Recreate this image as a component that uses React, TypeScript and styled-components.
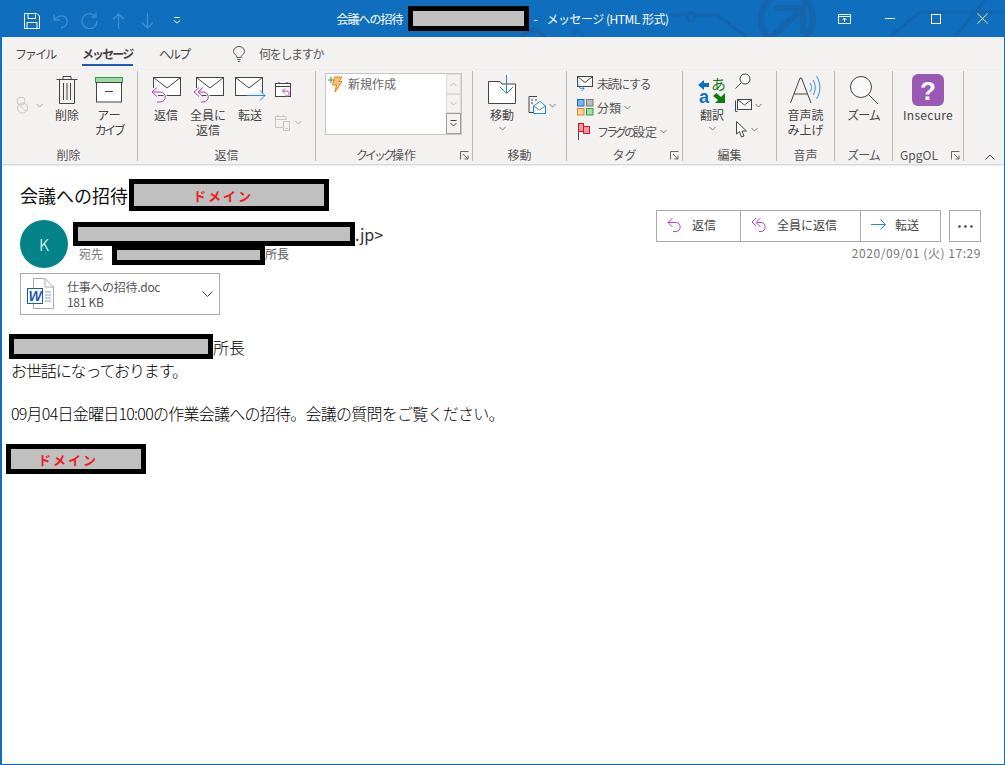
import styled, { createGlobalStyle } from 'styled-components';

const GlobalStyle = createGlobalStyle`
  html, body {
    margin: 0;
    padding: 0;
    background: #fff;
  }
  body {
    font-family: "Noto Sans CJK JP", "Noto Sans", sans-serif;
  }
`;

const Window = styled.div`
  position: relative;
  width: 1005px;
  height: 765px;
  box-sizing: border-box;
  border: 1px solid #106ebe;
  border-top: 0;
  border-left-width: 2px;
  background: #fff;
  overflow: hidden;
`;

const TitleBar = styled.header`
  position: relative;
  display: grid;
  grid-template-columns: 1fr auto 1fr;
  align-items: center;
  height: 37px;
  margin: 0 -1px 0 -2px;
  background: #106ebe;
  color: #fff;
  font-size: 12px;
`;

const TitleArt = styled.svg`
  position: absolute;
  top: 0;
  left: 0;
`;

const QuickAccess = styled.div`
  position: relative;
  display: flex;
  align-items: center;
  padding: 4px 0 0 17px;
`;

const QatButton = styled.span`
  display: flex;
  align-items: center;
  justify-content: center;
  width: 29px;
  height: 24px;
`;

const TitleText = styled.div`
  position: relative;
  display: flex;
  align-items: center;
  gap: 5px;
  line-height: 25px;
`;

const TitleDash = styled.span`
  width: 8px;
`;

const Condensed = styled.span<{ $ls: number }>`
  letter-spacing: ${(p) => p.$ls}px;
`;

const Redaction = styled.span<{ $w: number; $h: number; $pad?: number }>`
  display: flex;
  flex: none;
  align-items: center;
  justify-content: flex-start;
  box-sizing: border-box;
  width: ${(p) => p.$w}px;
  height: ${(p) => p.$h}px;
  padding-left: ${(p) => p.$pad ?? 0}px;
  border: 5px solid #000;
  background: #c0c0c0;
`;

const DomainMark = styled.span`
  color: #ed1c24;
  font-size: 13px;
  font-weight: 700;
  line-height: 1;
  letter-spacing: 2px;
`;

const WindowControls = styled.div`
  position: relative;
  display: flex;
  justify-content: flex-end;
`;

const ControlButton = styled.span`
  display: flex;
  align-items: center;
  justify-content: center;
  width: 46px;
  height: 37px;
`;

const TabBar = styled.nav`
  display: flex;
  align-items: center;
  height: 33px;
  padding-left: 13px;
  background: #f3f2f1;
  color: #444;
  font-size: 12px;
`;

const Tab = styled.span<{ $active?: boolean; $w: number }>`
  position: relative;
  width: ${(p) => p.$w}px;
  font-weight: ${(p) => (p.$active ? 700 : 400)};
  letter-spacing: -1.9px;
  line-height: 33px;
  ${(p) =>
    p.$active &&
    `&::after {
      content: '';
      position: absolute;
      left: 0;
      bottom: 4px;
      width: 51px;
      height: 2px;
      background: #185abd;
    }`}
`;

const TellMe = styled.span`
  display: flex;
  align-items: center;
  gap: 14px;
  padding-left: 8px;
  color: #555;
  letter-spacing: -1.3px;
`;

const Ribbon = styled.section`
  position: relative;
  display: flex;
  height: 94px;
  background: #f3f2f1;
  box-shadow: 0 1px 2px #c8c8c8;
  color: #444;
  font-size: 12px;
  line-height: 15px;
`;

const Group = styled.div<{ $w: number }>`
  position: relative;
  display: flex;
  flex: none;
  flex-direction: column;
  box-sizing: border-box;
  width: ${(p) => p.$w}px;
  height: 90px;
  margin-top: 1px;
  border-right: 1px solid #bdbbb9;
`;

const GroupBody = styled.div<{ $pad?: number }>`
  display: flex;
  flex: 1;
  align-items: flex-start;
  padding-left: ${(p) => p.$pad ?? 0}px;
`;

const GroupLabel = styled.div<{ $offset?: number }>`
  margin-bottom: -3px;
  padding-right: ${(p) => p.$offset ?? 0}px;
  color: #555;
  line-height: 18px;
  text-align: center;
`;

const Launcher = styled.svg`
  position: absolute;
  right: 3px;
  bottom: 1px;
`;

const BigButton = styled.div<{ $w: number }>`
  display: flex;
  flex: none;
  flex-direction: column;
  align-items: center;
  width: ${(p) => p.$w}px;
  text-align: center;
`;

const BigIcon = styled.div`
  display: flex;
  align-items: center;
  justify-content: center;
  height: 33px;
  margin-bottom: 1px;
  padding-top: 2px;
`;

const ChevronSlot = styled.div`
  display: flex;
  justify-content: center;
  padding-top: 4px;
`;

const SmallColumn = styled.div<{ $gap: number; $top: number; $left?: number }>`
  display: flex;
  flex-direction: column;
  gap: ${(p) => p.$gap}px;
  margin-top: ${(p) => p.$top}px;
  margin-left: ${(p) => p.$left ?? 0}px;
`;

const SmallItem = styled.div<{ $disabled?: boolean }>`
  display: flex;
  align-items: center;
  gap: 3px;
  height: 24px;
  white-space: nowrap;
  color: #555;
  opacity: ${(p) => (p.$disabled ? 0.6 : 1)};
`;

const QuickBox = styled.div`
  display: flex;
  width: 137px;
  height: 62px;
  margin-top: 2px;
  box-sizing: border-box;
  border: 1px solid #c8c6c4;
  background: #fff;
`;

const QuickList = styled.div`
  display: flex;
  flex: 1;
  align-items: flex-start;
  gap: 5px;
  padding: 2px 0 0 2px;
  color: #666;
`;

const QuickScroll = styled.div`
  display: grid;
  grid-template-rows: 20px 19px 21px;
  width: 15px;
`;

const QuickArrow = styled.span<{ $last?: boolean }>`
  display: flex;
  align-items: center;
  justify-content: center;
  box-sizing: border-box;
  border: 1px solid ${(p) => (p.$last ? '#9e9e9e' : '#dcdcdc')};
  background: #f3f2f1;
`;

const CollapseButton = styled.svg`
  position: absolute;
  right: 9px;
  bottom: 4px;
`;

const TranslateSvg = styled.svg`
  overflow: visible;
`;

const MessageHeader = styled.div`
  display: flex;
  flex-direction: column;
  padding: 15px 23px 0 18px;
`;

const SubjectRow = styled.h1`
  display: flex;
  align-items: center;
  gap: 1px;
  height: 32px;
  margin: 0;
  color: #111;
  font-size: 18px;
  font-weight: 400;
`;

const HeaderRow = styled.div`
  display: flex;
  justify-content: space-between;
  margin-top: -1px;
`;

const SenderBlock = styled.div`
  padding-top: 10px;
`;

const SenderRow = styled.div`
  display: flex;
  gap: 5px;
`;

const Avatar = styled.div`
  display: flex;
  align-items: center;
  justify-content: center;
  width: 48px;
  height: 48px;
  border-radius: 50%;
  background: #038387;
  color: #fff;
  font-size: 16px;
  font-weight: 300;
`;

const SenderInfo = styled.div`
  display: flex;
  flex-direction: column;
  padding-top: 2px;
`;

const SenderLine = styled.div`
  display: flex;
  align-items: flex-end;
  height: 24px;
  color: #333;
  font-size: 16px;
  line-height: 23px;
`;

const RecipientLine = styled.div`
  display: flex;
  align-items: center;
  height: 20px;
  margin-top: -1px;
  padding-left: 6px;
  color: #555;
  font-size: 12px;
  line-height: 16px;
`;

const RecipientText = styled.span`
  padding-bottom: 3px;
`;

const ToLabel = styled.span`
  width: 33px;
  padding-bottom: 3px;
  color: #777;
`;

const Attachment = styled.div`
  display: flex;
  align-items: center;
  box-sizing: border-box;
  width: 200px;
  height: 42px;
  margin-top: 5px;
  padding: 0 6px;
  border: 1px solid #ababab;
`;

const AttachmentText = styled.div`
  flex: 1;
  padding-left: 12px;
  color: #555;
  font-size: 12px;
  letter-spacing: -0.3px;
  line-height: 15px;
`;

const ActionColumn = styled.div`
  display: flex;
  flex-direction: column;
  align-items: flex-end;
`;

const ActionBar = styled.div`
  display: flex;
  gap: 8px;
`;

const ActionGroup = styled.div`
  display: flex;
  height: 32px;
  box-sizing: border-box;
  border: 1px solid #ababab;
`;

const ActionButton = styled.span<{ $w: number }>`
  display: flex;
  align-items: center;
  gap: 9px;
  box-sizing: border-box;
  width: ${(p) => p.$w}px;
  padding: 0 0 3px 10px;
  border-right: 1px solid #ababab;
  color: #444;
  font-size: 12px;
  &:last-child {
    border-right: 0;
  }
`;

const MoreButton = styled.span`
  display: flex;
  align-items: center;
  justify-content: center;
  width: 32px;
  height: 32px;
  box-sizing: border-box;
  border: 1px solid #ababab;
`;

const DateText = styled.div`
  margin-top: 2px;
  color: #777;
  font-size: 12px;
  letter-spacing: 0.55px;
  line-height: 17px;
`;

const MessageBody = styled.div`
  display: flex;
  flex-direction: column;
  align-items: flex-start;
  padding: 19px 0 0 7px;
  color: #000;
  font-size: 16px;
  font-weight: 300;
`;

const BodyNameRow = styled.div`
  display: flex;
  align-items: center;
  height: 25px;
`;

const BodyLine = styled.p<{ $gap?: number; $ls: number }>`
  margin: ${(p) => p.$gap ?? 0}px 0 0 2px;
  letter-spacing: ${(p) => p.$ls}px;
  line-height: 22px;
  white-space: nowrap;
`;

const SignatureBox = styled.div`
  margin: 20px 0 0 -3px;
`;

const PURPLE = '#b146c2';
const BLUE = '#2b88d8';
const DARK = '#444';
const RIBBON_BG = '#f3f2f1';

function Chevron({ color = '#777' }: { color?: string }) {
  return (
    <svg width="7" height="5" viewBox="0 0 7 5" fill="none">
      <path d="M.5 1 3.500 4 6.500 1" stroke={color} />
    </svg>
  );
}

function Envelope({ x = 3, y = 5 }: { x?: number; y?: number }) {
  return (
    <g stroke={DARK} fill="#fff">
      <rect x={x + 0.5} y={y + 0.5} width="27" height="18" />
      <path d={`M${x + 0.5} ${y + 0.5} ${x + 14} ${y + 11} ${x + 27.5} ${y + 0.5}`} fill="none" />
    </g>
  );
}

function ReplyBig() {
  return (
    <svg width="32" height="28" viewBox="0 0 32 28" fill="none">
      <Envelope x={3} y={1} />
      <path d="M1 12H8V28H1Z" fill={RIBBON_BG} />
      <path d="M2 16H10C17 16 17 26 10 26H7" stroke={RIBBON_BG} strokeWidth="3" />
      <path d="M2 16H10C17 16 17 26 10 26H7M7 11.500 2 16 7 20.500" stroke={PURPLE} />
    </svg>
  );
}

function ReplyAllBig() {
  return (
    <svg width="32" height="28" viewBox="0 0 32 28" fill="none">
      <Envelope x={4} y={1} />
      <path d="M1 12H10V28H1Z" fill={RIBBON_BG} />
      <path d="M7 16H11C18 16 18 26 11 26H9" stroke={RIBBON_BG} strokeWidth="3" />
      <path d="M7 16H11C18 16 18 26 11 26H9M7 11.500 2 16 7 20.500M11 11.500 6 16 11 20.500" stroke={PURPLE} />
    </svg>
  );
}

function ForwardBig() {
  return (
    <svg width="32" height="28" viewBox="0 0 32 28" fill="none">
      <Envelope x={1} y={1} />
      <path d="M13 17H32V24H13Z" fill={RIBBON_BG} />
      <path d="M13 19.500H31M26 14.500 31 19.500 26 24.500" stroke={BLUE} />
    </svg>
  );
}

function TrashIcon() {
  return (
    <svg width="22" height="30" viewBox="0 0 22 30" fill="none" stroke={DARK}>
      <path d="M.5 4.500H21.500M7 4V1.500H15V4M3.500 5V28.500H18.500V5M7.500 8V25M11 8V25M14.500 8V25" />
    </svg>
  );
}

function ArchiveIcon() {
  return (
    <svg width="28" height="26" viewBox="0 0 28 26" fill="none">
      <rect x=".5" y=".5" width="27" height="5" fill="#a0d8a4" stroke="#2f9e44" />
      <rect x="1.500" y="5.500" width="25" height="19.500" fill="#fff" stroke={DARK} />
      <path d="M10 14.500H18" stroke={DARK} />
    </svg>
  );
}

function IgnoreIcon() {
  return (
    <svg width="20" height="18" viewBox="0 0 20 18" fill="none" stroke="#aaa">
      <circle cx="8" cy="5" r="4" />
      <circle cx="9.500" cy="12" r="5" />
      <path d="M6 8.500 13 15.500" />
    </svg>
  );
}

function MeetingReplyIcon() {
  return (
    <svg width="17" height="18" viewBox="0 0 17 18" fill="none">
      <rect x=".5" y="2.500" width="15" height="13" fill="#fff" stroke={DARK} />
      <path d="M.5 5.500H15.500M4 1V3M12 1V3" stroke={DARK} />
      <path d="M8 10H12C15 10 15 15 12 15H10M10 7.500 7.500 10 10 12.500" stroke={PURPLE} />
    </svg>
  );
}

function CalendarPhoneIcon() {
  return (
    <svg width="17" height="17" viewBox="0 0 17 17" fill="none" stroke="#aaa">
      <path d="M9 13.500H.5V2.500H11V6M.5 5.500H11M3 1V3M8.500 1V3" />
      <rect x="8.500" y="7.500" width="6" height="9" fill={RIBBON_BG} />
      <path d="M10.500 14.500H12.500" />
    </svg>
  );
}

function BoltIcon() {
  return (
    <svg width="15" height="17" viewBox="0 0 15 17" fill="none">
      <path d="M6.500 1H14L11 5.500H14L7 16 8.500 9H4.500Z" fill="#fbbf7d" stroke="#e8811a" />
      <path d="M0 4H6M3 1V7" stroke="#2f9e44" />
    </svg>
  );
}

function MoveIcon() {
  return (
    <svg width="30" height="30" viewBox="0 0 30 30" fill="none">
      <path d="M1.500 6.500H13L15 9H28.500V28.500H1.500Z" fill="#fff" stroke={DARK} />
      <path d="M19.500 0V18M13 12 19.500 18.500 26 12" stroke={BLUE} />
    </svg>
  );
}

function RulesIcon() {
  return (
    <svg width="18" height="18" viewBox="0 0 18 18" fill="none">
      <path d="M9 .5H1V16.500H7" stroke={DARK} />
      <path d="M3 4H5M3 7H5M7 4H9" stroke={DARK} />
      <path d="M5.500 10 12 5.500 17.500 10V17.500H5.500Z" fill="#fff" stroke={BLUE} />
      <path d="M5.500 10 11.500 14 17.500 10" stroke={BLUE} />
    </svg>
  );
}

function UnreadIcon() {
  return (
    <svg width="17" height="17" viewBox="0 0 17 17" fill="none">
      <rect x=".5" y="1.500" width="15" height="10" fill="#fff" stroke={DARK} />
      <path d="M.5 1.500 8 7.500 15.500 1.500" stroke={DARK} />
      <path d="M1 7C0 12 3 14 7 13.500M4.500 11 7 13.500 4.500 16" stroke={BLUE} />
    </svg>
  );
}

function CategoryIcon() {
  return (
    <svg width="17" height="17" viewBox="0 0 17 17">
      <rect x=".5" y=".5" width="6.500" height="6.500" fill="#7fb5e8" stroke="#106ebe" />
      <rect x="9.500" y=".5" width="6.500" height="6.500" fill="#bbb" stroke="#777" />
      <rect x=".5" y="9.500" width="6.500" height="6.500" fill="#fdd8a0" stroke="#e8811a" />
      <rect x="9.500" y="9.500" width="6.500" height="6.500" fill="#a8dca8" stroke="#2f9e44" />
    </svg>
  );
}

function FlagIcon() {
  return (
    <svg width="17" height="17" viewBox="0 0 17 17">
      <path d="M1.500 0V17" stroke={DARK} />
      <rect x="6.500" y="3.500" width="6" height="7" fill="#f79a9f" stroke="#d01820" />
      <rect x="1.500" y=".5" width="5" height="8" fill="#f79a9f" stroke="#d01820" />
    </svg>
  );
}

function TranslateIcon() {
  return (
    <TranslateSvg width="30" height="30" viewBox="0 0 30 30">
      <path d="M1 10 7 5V8H12V12H7V15Z" fill="#106ebe" />
      <text x="14" y="15" fontSize="15" fill="#107c10" fontFamily="Noto Sans CJK JP, sans-serif">
        あ
      </text>
      <text x="2" y="28" fontSize="18" fontWeight="700" fill="#106ebe" fontFamily="Liberation Sans, sans-serif">
        a
      </text>
      <path d="M28 18V28H18L21 25 16 21 19.500 18 24 22 28 18Z" fill="#107c10" />
    </TranslateSvg>
  );
}

function FindIcon() {
  return (
    <svg width="16" height="16" viewBox="0 0 16 16" fill="none" stroke={DARK}>
      <circle cx="10" cy="6" r="5" fill="#fff" />
      <path d="M6.500 9.500 .5 15.500" />
    </svg>
  );
}

function MailStackIcon() {
  return (
    <svg width="17" height="13" viewBox="0 0 17 13" fill="none" stroke={DARK}>
      <path d="M2.500 12.500H.5V1.500" />
      <rect x="2.500" y=".5" width="14" height="10" fill="#fff" />
      <path d="M2.500 .5 9.500 6 16.500 .5" />
    </svg>
  );
}

function CursorIcon() {
  return (
    <svg width="13" height="17" viewBox="0 0 13 17" fill="#fff" stroke={DARK}>
      <path d="M1.500 .5V13L4.500 10.500 6.500 16 9 15 7 10H11.500Z" />
    </svg>
  );
}

function SpeakIcon() {
  return (
    <svg width="32" height="30" viewBox="0 0 32 30" fill="none">
      <path d="M.5 28 10 3H11.500L21 28M4 19H17.500" stroke={DARK} />
      <path d="M20 8C22 11 22 14 20 17M23 5C26 10 26 15 23 20M26.500 1C31 8 31 17 26.500 24" stroke={BLUE} />
    </svg>
  );
}

function ZoomIcon() {
  return (
    <svg width="30" height="30" viewBox="0 0 30 30" fill="none" stroke={DARK}>
      <circle cx="12" cy="12" r="10.500" fill="#f9f9f9" />
      <path d="M19.500 19.500 29 29" />
    </svg>
  );
}

function InsecureIcon() {
  return (
    <svg width="32" height="32" viewBox="0 0 32 32">
      <rect width="32" height="32" rx="6" fill="#9b59b6" />
      <text x="16" y="26" textAnchor="middle" fontSize="26" fontWeight="700" fill="#fff" fontFamily="Liberation Sans, sans-serif">
        ?
      </text>
    </svg>
  );
}

function WordDocIcon() {
  return (
    <svg width="28" height="32" viewBox="0 0 28 32" fill="none">
      <path d="M6.500 .5H18L26.500 9V30.500H6.500Z" fill="#fff" stroke="#aaa" />
      <path d="M18 .5V9H26.500" stroke="#aaa" />
      <path d="M18 14H24M18 17H24M18 20H24M18 23H24" stroke="#7fa6d9" />
      <rect x=".5" y="10.500" width="15" height="15" fill="#fff" stroke="#185abd" />
      <text x="8" y="23" textAnchor="middle" fontSize="14" fontWeight="700" fontStyle="italic" fill="#185abd" fontFamily="Liberation Sans, sans-serif">
        W
      </text>
    </svg>
  );
}

function ReplySmall() {
  return (
    <svg width="16" height="16" viewBox="0 0 16 16" fill="none" stroke={PURPLE}>
      <path d="M1 5.500H9C14.500 5.500 14.500 14.500 9 14.500H6M5.500 1 1 5.500 5.500 10" />
    </svg>
  );
}

function ReplyAllSmall() {
  return (
    <svg width="17" height="16" viewBox="0 0 17 16" fill="none" stroke={PURPLE}>
      <path d="M6 5.500H10C15.500 5.500 15.500 14.500 10 14.500H8M5 1 1 5 5 9M9.500 1 5 5.500 9.500 10" />
    </svg>
  );
}

function ForwardSmall() {
  return (
    <svg width="15" height="11" viewBox="0 0 15 11" fill="none" stroke={BLUE}>
      <path d="M0 5.500H14.500M9.500 .5 14.500 5.500 9.500 10.500" />
    </svg>
  );
}

function LauncherIcon() {
  return (
    <Launcher width="9" height="9" viewBox="0 0 9 9" fill="none" stroke="#666">
      <path d="M.5 8.500V.5H8.500M3 3 8 8M4.500 8H8V4.500" />
    </Launcher>
  );
}

function Domain({ w, h, pad }: { w: number; h: number; pad: number }) {
  return (
    <Redaction $w={w} $h={h} $pad={pad}>
      <DomainMark>ドメイン</DomainMark>
    </Redaction>
  );
}

export default function App() {
  return (
    <>
      <GlobalStyle />
      <Window>
        <TitleBar>
          <TitleArt width="1005" height="37" viewBox="0 0 1005 37" fill="none" stroke="#1565ae" strokeWidth="3">
            <circle cx="787" cy="19" r="26" strokeWidth="6" />
            <path d="M775 8H803V34M803 8 772 37" strokeWidth="6" />
            <path d="M670 15H687M695 15H717L747 37M890 37 920 12H1005M985 0 955 37" />
            <circle cx="691" cy="17" r="4" />
            <circle cx="533" cy="42" r="12" strokeWidth="4" />
            <circle cx="578" cy="35" r="4" />
          </TitleArt>
          <QuickAccess>
            <QatButton>
              <svg width="16" height="16" viewBox="0 0 16 16" fill="none" stroke="#fff">
                <path d="M.5 .5H13L15.500 3V15.500H.5ZM4 .5V5.500H11.500V.5M3 15.500V9.500H13V15.500" />
              </svg>
            </QatButton>
            <QatButton>
              <svg width="15" height="16" viewBox="0 0 15 16" fill="none" stroke="#3f8fd4" strokeWidth="1.300">
                <path d="M1 1V7H7M1.500 6.500C6 1 14 2 14 8.500 14 12 11.500 14.500 8 15" />
              </svg>
            </QatButton>
            <QatButton>
              <svg width="17" height="17" viewBox="0 0 17 17" fill="none" stroke="#3f8fd4" strokeWidth="1.300">
                <path d="M14 4A7.500 7.500 0 1 0 16 9M15 .5V5H10.500" />
              </svg>
            </QatButton>
            <QatButton>
              <svg width="13" height="16" viewBox="0 0 13 16" fill="none" stroke="#3f8fd4" strokeWidth="1.300">
                <path d="M6.500 16V1M1 6.500 6.500 1 12 6.500" />
              </svg>
            </QatButton>
            <QatButton>
              <svg width="13" height="16" viewBox="0 0 13 16" fill="none" stroke="#3f8fd4" strokeWidth="1.300">
                <path d="M6.500 0V15M1 9.500 6.500 15 12 9.500" />
              </svg>
            </QatButton>
            <QatButton>
              <svg width="8" height="7" viewBox="0 0 8 7" fill="none" stroke="#fff">
                <path d="M1 .5H7M1 3.500 4 6 7 3.500" />
              </svg>
            </QatButton>
          </QuickAccess>
          <TitleText>
            <Condensed $ls={-1}>会議への招待</Condensed>
            <Redaction $w={121} $h={25} />
            <TitleDash>-</TitleDash>
            <Condensed $ls={-0.5}>メッセージ (HTML 形式)</Condensed>
          </TitleText>
          <WindowControls>
            <ControlButton>
              <svg width="13" height="10" viewBox="0 0 13 10" fill="none" stroke="#fff">
                <path d="M.5 .5H12.500V9.500H.5ZM.5 2.500H12.500M6.500 8V4.500M4.500 6 6.500 4 8.500 6" />
              </svg>
            </ControlButton>
            <ControlButton>
              <svg width="10" height="1" viewBox="0 0 10 1" stroke="#fff">
                <path d="M0 .5H10" />
              </svg>
            </ControlButton>
            <ControlButton>
              <svg width="10" height="10" viewBox="0 0 10 10" fill="none" stroke="#fff">
                <rect x=".5" y=".5" width="9" height="9" />
              </svg>
            </ControlButton>
            <ControlButton>
              <svg width="11" height="11" viewBox="0 0 11 11" fill="none" stroke="#fff">
                <path d="M.5 .5 10.500 10.500M10.500 .5 .5 10.500" />
              </svg>
            </ControlButton>
          </WindowControls>
        </TitleBar>

        <TabBar>
          <Tab $w={67}>ファイル</Tab>
          <Tab $w={77} $active>
            メッセージ
          </Tab>
          <Tab $w={66}>ヘルプ</Tab>
          <TellMe>
            <svg width="12" height="16" viewBox="0 0 12 16" fill="none" stroke="#555">
              <path d="M4 11.500C4 9 .5 8 .5 5.500A5.500 5 0 0 1 11.500 5.500C11.500 8 8 9 8 11.500ZM4.500 13.500H7.500M5 15.500H7" />
            </svg>
            何をしますか
          </TellMe>
        </TabBar>

        <Ribbon>
          <Group $w={136}>
            <GroupBody $pad={11}>
              <SmallColumn $gap={0} $top={22}>
                <SmallItem $disabled>
                  <IgnoreIcon />
                  <Chevron />
                </SmallItem>
              </SmallColumn>
              <BigButton $w={48}>
                <BigIcon>
                  <TrashIcon />
                </BigIcon>
                削除
              </BigButton>
              <BigButton $w={36}>
                <BigIcon>
                  <ArchiveIcon />
                </BigIcon>
                アー
                <Condensed $ls={-2.5}>カイブ</Condensed>
              </BigButton>
            </GroupBody>
            <GroupLabel $offset={2}>削除</GroupLabel>
          </Group>

          <Group $w={178}>
            <GroupBody $pad={7}>
              <BigButton $w={42}>
                <BigIcon>
                  <ReplyBig />
                </BigIcon>
                返信
              </BigButton>
              <BigButton $w={42}>
                <BigIcon>
                  <ReplyAllBig />
                </BigIcon>
                全員に
                <br />
                返信
              </BigButton>
              <BigButton $w={42}>
                <BigIcon>
                  <ForwardBig />
                </BigIcon>
                転送
              </BigButton>
              <SmallColumn $gap={8} $top={7} $left={4}>
                <SmallItem>
                  <MeetingReplyIcon />
                </SmallItem>
                <SmallItem $disabled>
                  <CalendarPhoneIcon />
                  <Chevron />
                </SmallItem>
              </SmallColumn>
            </GroupBody>
            <GroupLabel>返信</GroupLabel>
          </Group>

          <Group $w={157}>
            <GroupBody $pad={9}>
              <QuickBox>
                <QuickList>
                  <BoltIcon />
                  新規作成
                </QuickList>
                <QuickScroll>
                  <QuickArrow>
                    <svg width="7" height="5" viewBox="0 0 7 5" fill="none" stroke="#bbb">
                      <path d="M.5 4 3.500 1 6.500 4" />
                    </svg>
                  </QuickArrow>
                  <QuickArrow>
                    <Chevron color="#bbb" />
                  </QuickArrow>
                  <QuickArrow $last>
                    <svg width="7" height="7" viewBox="0 0 7 7" fill="none" stroke="#444">
                      <path d="M.5 .5H6.500M.5 3 3.500 6 6.500 3" />
                    </svg>
                  </QuickArrow>
                </QuickScroll>
              </QuickBox>
            </GroupBody>
            <GroupLabel $offset={16}>
              <Condensed $ls={-3}>クイック</Condensed>
              操作
            </GroupLabel>
            <LauncherIcon />
          </Group>

          <Group $w={94}>
            <GroupBody $pad={3}>
              <BigButton $w={52}>
                <BigIcon>
                  <MoveIcon />
                </BigIcon>
                移動
                <ChevronSlot>
                  <Chevron />
                </ChevronSlot>
              </BigButton>
              <SmallColumn $gap={0} $top={22}>
                <SmallItem>
                  <RulesIcon />
                  <Chevron />
                </SmallItem>
              </SmallColumn>
            </GroupBody>
            <GroupLabel>移動</GroupLabel>
          </Group>

          <Group $w={116}>
            <GroupBody $pad={10}>
              <SmallColumn $gap={0} $top={0}>
                <SmallItem>
                  <UnreadIcon />
                  <Condensed $ls={-1.4}>未読にする</Condensed>
                </SmallItem>
                <SmallItem>
                  <CategoryIcon />
                  分類
                  <Chevron />
                </SmallItem>
                <SmallItem>
                  <FlagIcon />
                  <span>
                    <Condensed $ls={-3}>フラグの</Condensed>
                    設定
                  </span>
                  <Chevron />
                </SmallItem>
              </SmallColumn>
            </GroupBody>
            <GroupLabel>タグ</GroupLabel>
            <LauncherIcon />
          </Group>

          <Group $w={94}>
            <GroupBody $pad={6}>
              <BigButton $w={46}>
                <BigIcon>
                  <TranslateIcon />
                </BigIcon>
                翻訳
                <ChevronSlot>
                  <Chevron />
                </ChevronSlot>
              </BigButton>
              <SmallColumn $gap={0} $top={-2}>
                <SmallItem>
                  <FindIcon />
                </SmallItem>
                <SmallItem>
                  <MailStackIcon />
                  <Chevron />
                </SmallItem>
                <SmallItem>
                  <CursorIcon />
                  <Chevron />
                </SmallItem>
              </SmallColumn>
            </GroupBody>
            <GroupLabel>編集</GroupLabel>
          </Group>

          <Group $w={58}>
            <GroupBody>
              <BigButton $w={57}>
                <BigIcon>
                  <SpeakIcon />
                </BigIcon>
                音声読
                <br />
                み上げ
              </BigButton>
            </GroupBody>
            <GroupLabel>音声</GroupLabel>
          </Group>

          <Group $w={58}>
            <GroupBody>
              <BigButton $w={57}>
                <BigIcon>
                  <ZoomIcon />
                </BigIcon>
                <Condensed $ls={-1}>ズーム</Condensed>
              </BigButton>
            </GroupBody>
            <GroupLabel>
              <Condensed $ls={-1}>ズーム</Condensed>
            </GroupLabel>
          </Group>

          <Group $w={71}>
            <GroupBody>
              <BigButton $w={70}>
                <BigIcon>
                  <InsecureIcon />
                </BigIcon>
                <Condensed $ls={0.3}>Insecure</Condensed>
              </BigButton>
            </GroupBody>
            <GroupLabel $offset={18}>GpgOL</GroupLabel>
            <LauncherIcon />
          </Group>

          <CollapseButton width="10" height="6" viewBox="0 0 10 6" fill="none" stroke="#444">
            <path d="M.5 5.500 5 1 9.500 5.500" />
          </CollapseButton>
        </Ribbon>

        <MessageHeader>
          <SubjectRow>
            会議への招待
            <Domain w={200} h={32} pad={59} />
          </SubjectRow>
          <HeaderRow>
            <SenderBlock>
              <SenderRow>
                <Avatar>K</Avatar>
                <SenderInfo>
                  <SenderLine>
                    <Redaction $w={282} $h={24} />
                    .jp&gt;
                  </SenderLine>
                  <RecipientLine>
                    <ToLabel>宛先</ToLabel>
                    <Redaction $w={153} $h={20} />
                    <RecipientText>所長</RecipientText>
                  </RecipientLine>
                </SenderInfo>
              </SenderRow>
              <Attachment>
                <WordDocIcon />
                <AttachmentText>
                  仕事への招待.doc
                  <br />
                  181 KB
                </AttachmentText>
                <svg width="11" height="6" viewBox="0 0 11 6" fill="none" stroke="#444">
                  <path d="M.5 .5 5.500 5.500 10.500 .5" />
                </svg>
              </Attachment>
            </SenderBlock>
            <ActionColumn>
              <ActionBar>
                <ActionGroup>
                  <ActionButton $w={84}>
                    <ReplySmall />
                    返信
                  </ActionButton>
                  <ActionButton $w={120}>
                    <ReplyAllSmall />
                    全員に返信
                  </ActionButton>
                  <ActionButton $w={79}>
                    <ForwardSmall />
                    転送
                  </ActionButton>
                </ActionGroup>
                <MoreButton>
                  <svg width="15" height="3" viewBox="0 0 15 3" fill="#444">
                    <circle cx="1.500" cy="1.500" r="1.300" />
                    <circle cx="7.500" cy="1.500" r="1.300" />
                    <circle cx="13.500" cy="1.500" r="1.300" />
                  </svg>
                </MoreButton>
              </ActionBar>
              <DateText>2020/09/01 (火) 17:29</DateText>
            </ActionColumn>
          </HeaderRow>
        </MessageHeader>

        <MessageBody>
          <BodyNameRow>
            <Redaction $w={204} $h={25} />
            所長
          </BodyNameRow>
          <BodyLine $ls={-1.1}>お世話になっております。</BodyLine>
          <BodyLine $gap={21} $ls={-0.75}>
            09月04日金曜日10:00の作業会議への招待。会議の質問をご覧ください。
          </BodyLine>
          <SignatureBox>
            <Domain w={140} h={30} pad={27} />
          </SignatureBox>
        </MessageBody>
      </Window>
    </>
  );
}
